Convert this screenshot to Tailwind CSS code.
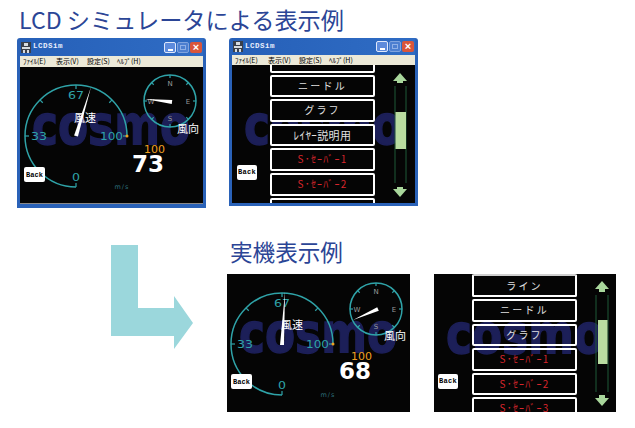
<!DOCTYPE html>
<html lang="ja">
<head>
  <meta charset="UTF-8">
  <title>LCD シミュレータによる表示例</title>
  <script src="https://cdn.jsdelivr.net/npm/@tailwindcss/browser@4"></script>
</head>
<body class="bg-white">
  <div class="w-[635px] h-[428px] overflow-hidden bg-white font-['Noto_Sans_CJK_JP',sans-serif]">

    <h1 class="pl-[19px] pt-[3px] h-[38px] text-[23.2px] leading-[33px] font-normal text-[#2b4596] whitespace-nowrap">LCD シミュレータによる表示例</h1>

    <!-- シミュレータ -->
    <div class="flex items-start gap-[23px] pl-[17px]">
      <div class="w-[189px] h-[170px] flex flex-col bg-[#2a62b8] rounded-t-[3px] px-[3px] pb-[3px]">
        <div class="h-[18px] flex items-center gap-[2px] bg-gradient-to-r from-[#2660b8] to-[#2f6cc4]">
          <svg class="w-[10px] h-[11px] ml-[1px]" viewBox="0 0 10 11"><rect width="10" height="11" fill="#3a3f4a"/><path d="M3 1h4v3H3zM1 5h8v2H1zM2 8h2v3H2zM6 8h2v3H6z" fill="#d8dce0"/></svg>
          <span class="text-[7.5px] font-bold text-[#e8eefc] tracking-[0.5px] font-['Liberation_Mono',monospace]">LCDSim</span>
          <span class="ml-auto w-[12px] h-[11px] rounded-[2px] border border-[#dfe8fb] bg-[#5d8bdc] flex items-end justify-center pb-[1px]"><i class="block w-[5px] h-[2px] bg-white"></i></span>
          <span class="-ml-[1px] w-[12px] h-[11px] rounded-[2px] border border-[#7fa3de] bg-[#4d7fd0] p-[2px]"><i class="block w-full h-full border border-[#8fb0e6]"></i></span>
          <span class="-ml-[1px] w-[12px] h-[11px] rounded-[2px] bg-[#d9553a] text-white text-[11px] leading-[11px] text-center font-bold font-['Liberation_Sans',sans-serif] mr-[1px]">×</span>
        </div>
        <div class="h-[11px] flex items-center pl-[3px] bg-[#ece9d8] text-[7px] leading-none text-black whitespace-nowrap">
          <span class="w-[33px]">ﾌｧｲﾙ(E)</span><span class="w-[31px]">表示(V)</span><span class="w-[30px]">設定(S)</span><span>ﾍﾙﾌﾟ(H)</span>
        </div>
        <div class="lcd-gauge w-[183px] h-[137px] bg-[#050505] border-b border-[#8a8a8a]" data-value="73" data-needle="56,69,71,20" data-compass="152,35,125,32" data-shift="1,-1"></div>
      </div>

      <div class="w-[189px] h-[168px] flex flex-col bg-[#2a62b8] rounded-t-[3px] px-[3px] pb-[3px]">
        <div class="h-[17px] flex items-center gap-[2px] bg-gradient-to-r from-[#2660b8] to-[#2f6cc4]">
          <svg class="w-[10px] h-[11px] ml-[1px]" viewBox="0 0 10 11"><rect width="10" height="11" fill="#3a3f4a"/><path d="M3 1h4v3H3zM1 5h8v2H1zM2 8h2v3H2zM6 8h2v3H6z" fill="#d8dce0"/></svg>
          <span class="text-[7.5px] font-bold text-[#e8eefc] tracking-[0.5px] font-['Liberation_Mono',monospace]">LCDSim</span>
          <span class="ml-auto w-[12px] h-[11px] rounded-[2px] border border-[#dfe8fb] bg-[#5d8bdc] flex items-end justify-center pb-[1px]"><i class="block w-[5px] h-[2px] bg-white"></i></span>
          <span class="-ml-[1px] w-[12px] h-[11px] rounded-[2px] border border-[#7fa3de] bg-[#4d7fd0] p-[2px]"><i class="block w-full h-full border border-[#8fb0e6]"></i></span>
          <span class="-ml-[1px] w-[12px] h-[11px] rounded-[2px] bg-[#d9553a] text-white text-[11px] leading-[11px] text-center font-bold font-['Liberation_Sans',sans-serif] mr-[1px]">×</span>
        </div>
        <div class="h-[10px] flex items-center pl-[3px] bg-[#ece9d8] text-[7px] leading-none text-black whitespace-nowrap">
          <span class="w-[33px]">ﾌｧｲﾙ(E)</span><span class="w-[31px]">表示(V)</span><span class="w-[30px]">設定(S)</span><span>ﾍﾙﾌﾟ(H)</span>
        </div>
        <div class="relative w-[183px] h-[138px] bg-[#050505] overflow-hidden flex">
          <svg class="absolute left-0 top-0" width="183" height="138" viewBox="0 0 183 138"><text x="12" y="79" font-family="DejaVu Sans" font-weight="700" font-size="56" fill="#1c1f58" stroke="#1c1f58" stroke-width="1.5" textLength="158" lengthAdjust="spacingAndGlyphs">cosmo</text></svg>
          <div class="relative w-[38px] shrink-0 pt-[100px] pl-[5px]">
            <div class="w-[20px] h-[15px] bg-white rounded-[2px] text-black text-[7px] leading-[15px] text-center font-bold tracking-[0.3px] font-['Liberation_Mono',monospace]">Back</div>
          </div>
          <div class="relative w-[105px] shrink-0 -mt-[15px] flex flex-col gap-[2px] text-[10px] tracking-[2.2px] text-center text-[#e0e0e0]">
            <div class="h-[22.6px] shrink-0 border-2 border-white rounded-[2px] bg-[#050505]"></div>
            <div class="h-[22.6px] shrink-0 border-2 border-white rounded-[2px] bg-[#050505] leading-[18px]">ニードル</div>
            <div class="h-[22.6px] shrink-0 border-2 border-white rounded-[2px] bg-[#050505] leading-[18px]">グラフ</div>
            <div class="h-[22.6px] shrink-0 border-2 border-white rounded-[2px] bg-[#050505] leading-[18px] text-[11px] tracking-[0.4px] whitespace-nowrap">ﾚｲﾔｰ説明用</div>
            <div class="h-[22.6px] shrink-0 border-2 border-white rounded-[2px] bg-[#050505] leading-[18px] text-[#d8262c] tracking-[1.2px] whitespace-nowrap">S･ｾｰﾊﾞｰ1</div>
            <div class="h-[22.6px] shrink-0 border-2 border-white rounded-[2px] bg-[#050505] leading-[18px] text-[#d8262c] tracking-[1.2px] whitespace-nowrap">S･ｾｰﾊﾞｰ2</div>
            <div class="h-[22.6px] shrink-0 border-2 border-white rounded-[2px] bg-[#050505]"></div>
          </div>
          <svg class="relative shrink-0" width="40" height="138" viewBox="143 0 40 138">
            <path d="M168 8l7 8h-14z M165 16h6v2h-6z" fill="#a9d79c"/>
            <path d="M163 21v97M174 21v97" stroke="#1f5a38" stroke-width="1"/>
            <rect x="163.5" y="47" width="10.5" height="37" fill="#b9dca0"/>
            <path d="M168 132l7-8h-14z M165 122h6v2h-6z" fill="#a9d79c"/>
          </svg>
        </div>
      </div>
    </div>

    <!-- 実機 -->
    <div class="grid grid-cols-[227px_1fr]">
      <div class="pt-[37px] pl-[111px]">
        <svg width="82" height="104" viewBox="111 245 82 104"><polygon points="111,245 138,245 138,308 174,308 174,296 193,323 174,349 174,336 111,336" fill="#9bd7dc"/></svg>
      </div>
      <div>
        <h2 class="pl-[3px] pt-[27px] h-[66px] text-[22.6px] leading-[33px] font-normal text-[#2b4596]">実機表示例</h2>
        <div class="flex gap-[24px]">
          <div class="lcd-gauge w-[183px] h-[138px] bg-[#050505]" data-value="68" data-needle="55,71,58,18" data-compass="151,35,126,46" data-shift="0,0"></div>

          <div class="relative w-[182px] h-[138px] bg-[#050505] overflow-hidden flex">
            <svg class="absolute left-0 top-0" width="182" height="138" viewBox="0 0 182 138"><text x="12" y="79" font-family="DejaVu Sans" font-weight="700" font-size="56" fill="#1c1f58" stroke="#1c1f58" stroke-width="1.5" textLength="158" lengthAdjust="spacingAndGlyphs">cosmo</text></svg>
            <div class="relative w-[38px] shrink-0 pt-[100px] pl-[4px]">
              <div class="w-[20px] h-[15px] bg-white rounded-[2px] text-black text-[7px] leading-[15px] text-center font-bold tracking-[0.3px] font-['Liberation_Mono',monospace]">Back</div>
            </div>
            <div class="relative w-[105px] shrink-0 flex flex-col gap-[2px] text-[10px] tracking-[2.2px] text-center text-[#e0e0e0]">
              <div class="h-[23.4px] shrink-0 border-2 border-white border-t-[#cfcfcf] rounded-[2px] leading-[20px]">ライン</div>
              <div class="h-[22.4px] shrink-0 border-2 border-white rounded-[2px] leading-[18px]">ニードル</div>
              <div class="h-[22.4px] shrink-0 border-2 border-white rounded-[2px] leading-[18px]">グラフ</div>
              <div class="h-[22.4px] shrink-0 border-2 border-white rounded-[2px] leading-[18px] text-[#d8262c] tracking-[1.2px] whitespace-nowrap">S･ｾｰﾊﾞｰ1</div>
              <div class="h-[22.4px] shrink-0 border-2 border-white rounded-[2px] leading-[18px] text-[#d8262c] tracking-[1.2px] whitespace-nowrap">S･ｾｰﾊﾞｰ2</div>
              <div class="h-[22.4px] shrink-0 border-2 border-white rounded-[2px] leading-[18px] text-[#d8262c] tracking-[1.2px] whitespace-nowrap">S･ｾｰﾊﾞｰ3</div>
            </div>
            <svg class="relative shrink-0" width="39" height="138" viewBox="143 0 39 138">
              <path d="M168 7l7 8h-14z M165 15h6v3h-6z" fill="#a9d79c"/>
              <path d="M162 21v97M174 21v97" stroke="#1f5a38" stroke-width="1"/>
              <rect x="164" y="46" width="9.5" height="44" fill="#b9dca0"/>
              <path d="M168 132l7-8h-14z M165 121h6v3h-6z" fill="#a9d79c"/>
            </svg>
          </div>
        </div>
      </div>
    </div>
  </div>

  <script>
    // 針（先細り）
    function needle(x1, y1, x2, y2, w) {
      const len = Math.hypot(x2 - x1, y2 - y1);
      const nx = -(y2 - y1) / len * w, ny = (x2 - x1) / len * w;
      return `<polygon points="${x1 + nx},${y1 + ny} ${x1 - nx},${y1 - ny} ${x2},${y2}" fill="#fff"/>`;
    }

    // 目盛り
    function ticks(cx, cy, r, from, to, step, len) {
      let out = '';
      for (let a = from; a <= to; a += step) {
        const c = Math.cos(a * Math.PI / 180), s = Math.sin(a * Math.PI / 180);
        out += `<line x1="${cx + c * r}" y1="${cy + s * r}" x2="${cx + c * (r - len)}" y2="${cy + s * (r - len)}" stroke="#2fa3a8" stroke-width="1.2"/>`;
      }
      return out;
    }

    document.querySelectorAll('.lcd-gauge').forEach(el => {
      const n = el.dataset.needle.split(',').map(Number);
      const c = el.dataset.compass.split(',').map(Number);
      const [dx, dy] = el.dataset.shift.split(',').map(Number);
      const teal = '#2fa3a8';
      el.innerHTML = `<svg width="183" height="137" viewBox="0 0 183 137" font-family="DejaVu Sans">
        <text x="12" y="${78 + dy}" font-weight="700" font-size="56" fill="#1c1f58" stroke="#1c1f58" stroke-width="1.5" textLength="158" lengthAdjust="spacingAndGlyphs">cosmo</text>
        <g transform="translate(${dx} ${dy})">
          <path d="M55 121A51 51 0 1 1 106 70" fill="none" stroke="${teal}" stroke-width="1.5"/>
          ${ticks(55, 70, 51, 90, 360, 45, 4)}
          <circle cx="106" cy="70" r="1.5" fill="#f0a020"/>
          <g fill="${teal}" font-size="10">
            <text x="47" y="33" textLength="16" lengthAdjust="spacingAndGlyphs">67</text>
            <text x="10" y="74" textLength="16" lengthAdjust="spacingAndGlyphs">33</text>
            <text x="79" y="74" textLength="23" lengthAdjust="spacingAndGlyphs">100</text>
            <text x="51" y="115" textLength="8" lengthAdjust="spacingAndGlyphs">0</text>
          </g>
          <circle cx="149" cy="35" r="26" fill="none" stroke="${teal}" stroke-width="1.5"/>
          ${ticks(149, 35, 26, 0, 315, 45, 3)}
          <g fill="#9a9a9a" font-size="7" text-anchor="middle">
            <text x="149" y="20">N</text>
            <text x="167" y="38">E</text>
            <text x="149" y="55">S</text>
            <text x="130" y="38">W</text>
          </g>
          <text x="101" y="123" fill="#2d6f78" font-size="6.5" text-anchor="middle" letter-spacing="1">m/s</text>
        </g>
        ${needle(n[0], n[1], n[2], n[3], 2)}
        ${needle(c[0], c[1], c[2], c[3], 2)}
        <g fill="#fff" font-family="Noto Sans CJK JP" font-size="11" text-anchor="middle">
          <text x="65" y="55">風速</text>
          <text x="168" y="66">風向</text>
        </g>
        <text x="124" y="86" fill="#f0a020" font-size="10" textLength="21" lengthAdjust="spacingAndGlyphs">100</text>
        <text x="128" y="105" fill="#fff" font-size="23" font-weight="700" text-anchor="middle">${el.dataset.value}</text>
        <rect x="4" y="100" width="21" height="15" rx="2" fill="#fff"/>
        <text x="14.5" y="110" fill="#000" font-family="Liberation Mono" font-weight="700" font-size="7" text-anchor="middle">Back</text>
      </svg>`;
    });
  </script>
</body>
</html>
